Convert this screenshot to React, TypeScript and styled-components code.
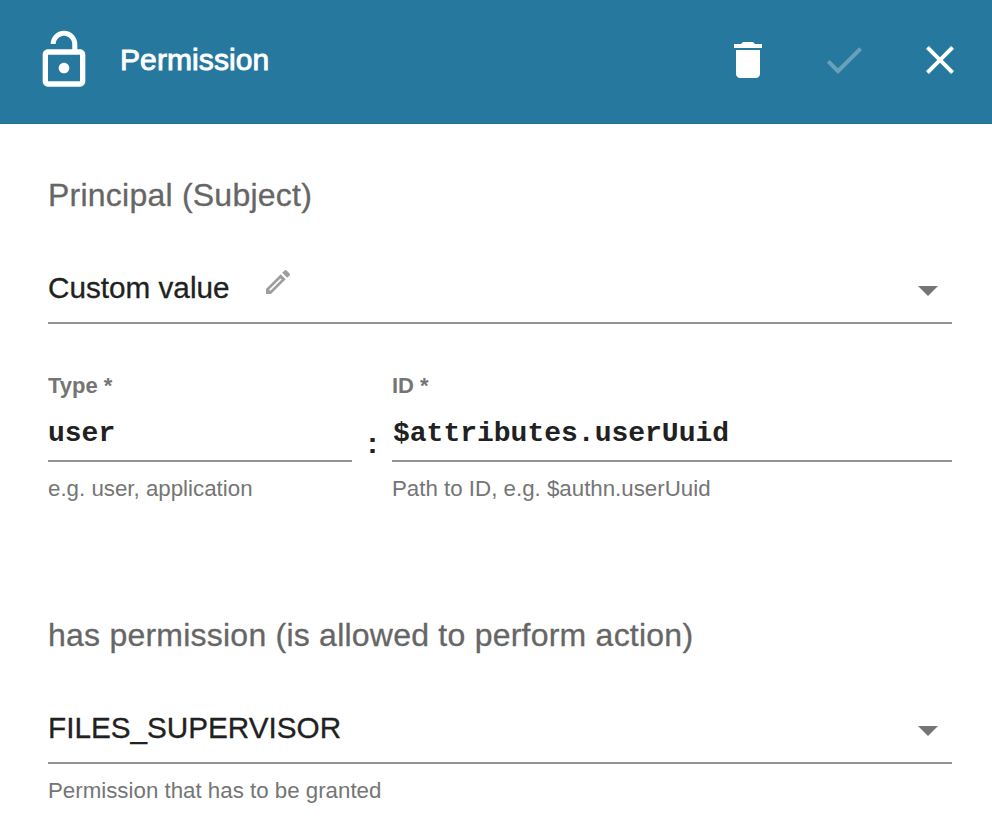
import React from "react";
import styled, { createGlobalStyle } from "styled-components";

const GlobalStyle = createGlobalStyle`
  *, *::before, *::after { box-sizing: border-box; }
  body { margin: 0; background: #fff; }
`;

const Dialog = styled.main`
  width: 992px;
  height: 824px;
  overflow: hidden;
  background: #fff;
  color: #212121;
  font-family: "Liberation Sans", Arial, sans-serif;
`;

const Header = styled.header`
  display: flex;
  align-items: center;
  height: 124px;
  padding: 0 28px 4px 32px;
  background: #26789e;
  border-bottom: 1px solid #23728f;
  color: #fff;
`;

const Title = styled.h1`
  margin: 0 auto 0 24px;
  font-size: 30px;
  line-height: 36px;
  font-weight: 400;
  letter-spacing: 0.1px;
  -webkit-text-stroke: 0.9px currentColor;
`;

const Actions = styled.div`
  display: flex;
  gap: 48px;
`;

const IconButton = styled.button`
  display: block;
  width: 48px;
  height: 48px;
  padding: 0;
  border: 0;
  background: none;
  color: inherit;
  &:disabled { opacity: 0.3; }
`;

const Icon = styled.svg<{ $size: number }>`
  display: block;
  flex: none;
  width: ${(p) => p.$size}px;
  height: ${(p) => p.$size}px;
  fill: currentColor;
`;

const Content = styled.div`
  display: flex;
  flex-direction: column;
  padding: 51px 40px 0 48px;
`;

const SectionTitle = styled.h2`
  margin: 0;
  height: 40px;
  font-size: 32px;
  line-height: 40px;
  font-weight: 400;
  letter-spacing: 0.23px;
  color: #666;
  -webkit-text-stroke: 0.3px currentColor;
`;

const Select = styled.div`
  display: flex;
  align-items: center;
  height: 74px;
  margin-top: 35px;
  padding: 4px 14px 0 0;
  border-bottom: 2px solid #949494;
`;

const SelectValue = styled.span`
  font-size: 29.7px;
  line-height: 36px;
  -webkit-text-stroke: 0.3px currentColor;
`;

const EditIcon = styled.span`
  margin: 0 0 12px 32px;
  color: #9e9e9e;
`;

const Caret = styled.span`
  margin: 6px 0 0 auto;
  border: 10px solid transparent;
  border-top-color: #757575;
  border-bottom: 0;
`;

const FieldRow = styled.div`
  display: grid;
  grid-template-columns: 304px 40px 560px;
  height: 178px;
  margin: 48px 0 65px;
`;

const Field = styled.label`
  display: flex;
  flex-direction: column;
`;

const Label = styled.span`
  height: 26px;
  font-size: 22px;
  line-height: 28px;
  font-weight: 700;
  color: #757575;
`;

const Input = styled.input<{ $indent?: number }>`
  height: 64px;
  padding: 8px 0 0 ${(p) => p.$indent ?? 0}px;
  border: 0;
  border-bottom: 2px solid #949494;
  outline: 0;
  background: none;
  color: #212121;
  font: 700 28px "Liberation Mono", "Courier New", monospace;
`;

const Hint = styled.span`
  margin-top: 13px;
  font-size: 22.3px;
  line-height: 28px;
  color: #757575;
`;

const Separator = styled.span`
  padding: 53px 0 0 1px;
  text-align: center;
  font-size: 30px;
  line-height: 36px;
  font-weight: 700;
`;

const paths = {
  lockOpen:
    "M12 17c1.1 0 2-.9 2-2s-.9-2-2-2-2 .9-2 2 .9 2 2 2zm6-9h-1V6c0-2.76-2.24-5-5-5S7 3.24 7 6h1.9c0-1.71 1.39-3.1 3.1-3.1 1.71 0 3.1 1.39 3.1 3.1v2H6c-1.1 0-2 .9-2 2v10c0 1.1.9 2 2 2h12c1.1 0 2-.9 2-2V10c0-1.1-.9-2-2-2zm0 12H6V10h12v10z",
  trash: "M6 19c0 1.1.9 2 2 2h8c1.1 0 2-.9 2-2V7H6v12zM19 4h-3.5l-1-1h-5l-1 1H5v2h14V4z",
  check: "M9 16.17L4.83 12l-1.42 1.41L9 19 21 7l-1.41-1.41z",
  close:
    "M19 6.41L17.59 5 12 10.59 6.41 5 5 6.41 10.59 12 5 17.59 6.41 19 12 13.41 17.59 19 19 17.59 13.41 12z",
  pencil:
    "M13.8 9.3L14.7 10.2L6.5 18.4H5.6V17.5L13.8 9.3M17.66 3C17.41 3 17.15 3.1 16.96 3.29L15.13 5.12L18.88 8.87L20.71 7.04C21.1 6.65 21.1 6 20.71 5.63L18.37 3.29C18.17 3.09 17.92 3 17.66 3M14.06 6.19L3 17.25V21H6.75L17.81 9.94L14.06 6.19Z",
};

function Glyph({ name, size }: { name: keyof typeof paths; size: number }) {
  return (
    <Icon $size={size} viewBox="0 0 24 24" aria-hidden="true">
      <path d={paths[name]} />
    </Icon>
  );
}

export default function App() {
  return (
    <>
      <GlobalStyle />
      <Dialog>
        <Header>
          <Glyph name="lockOpen" size={64} />
          <Title>Permission</Title>
          <Actions>
            <IconButton aria-label="Delete"><Glyph name="trash" size={48} /></IconButton>
            <IconButton aria-label="Save" disabled><Glyph name="check" size={48} /></IconButton>
            <IconButton aria-label="Close"><Glyph name="close" size={48} /></IconButton>
          </Actions>
        </Header>
        <Content>
          <SectionTitle>Principal (Subject)</SectionTitle>
          <Select>
            <SelectValue>Custom value</SelectValue>
            <EditIcon><Glyph name="pencil" size={32} /></EditIcon>
            <Caret />
          </Select>
          <FieldRow>
            <Field>
              <Label>Type *</Label>
              <Input defaultValue="user" spellCheck={false} />
              <Hint>e.g. user, application</Hint>
            </Field>
            <Separator>:</Separator>
            <Field>
              <Label>ID *</Label>
              <Input $indent={1} defaultValue="$attributes.userUuid" spellCheck={false} />
              <Hint>Path to ID, e.g. $authn.userUuid</Hint>
            </Field>
          </FieldRow>
          <SectionTitle>has permission (is allowed to perform action)</SectionTitle>
          <Select>
            <SelectValue>FILES_SUPERVISOR</SelectValue>
            <Caret />
          </Select>
          <Hint>Permission that has to be granted</Hint>
        </Content>
      </Dialog>
    </>
  );
}
